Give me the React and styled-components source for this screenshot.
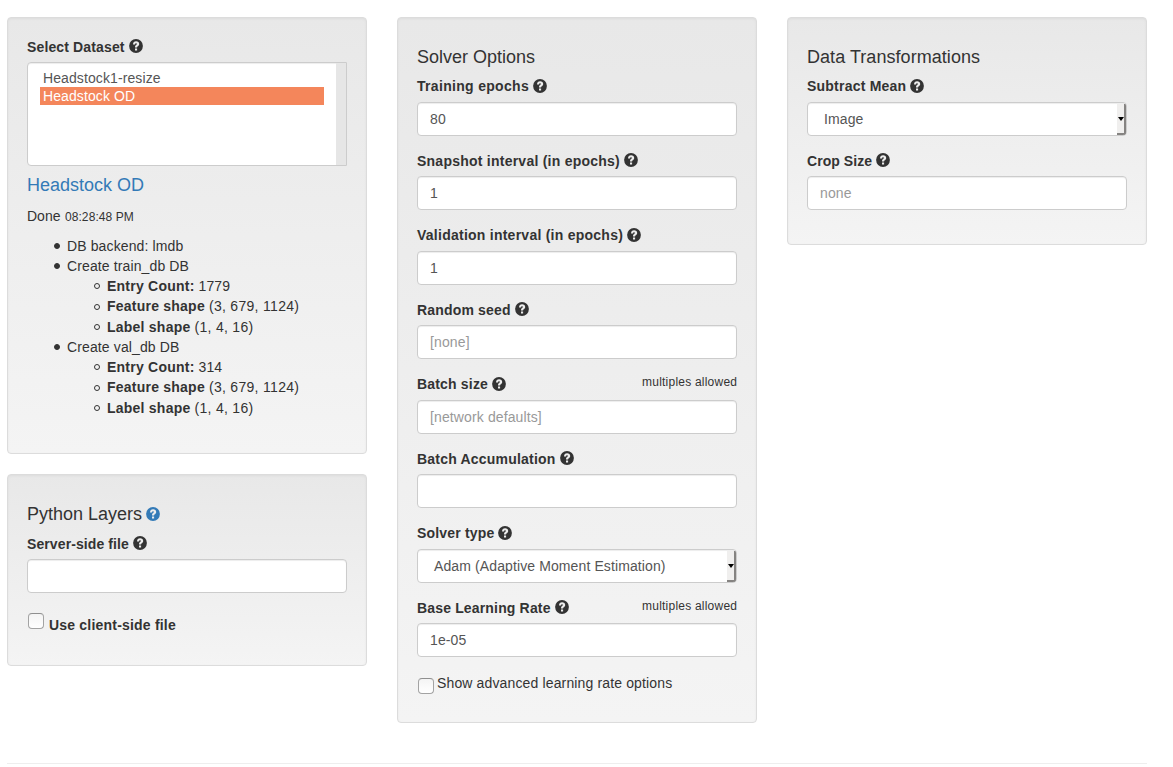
import React from "react";
import styled, { createGlobalStyle } from "styled-components";

const Global = createGlobalStyle`
  *, *::before { box-sizing: border-box; }
  body {
    margin: 0;
    background: #fff;
    color: #333;
    font: 14px/20px "Liberation Sans", Arial, sans-serif;
    overflow: hidden;
  }
`;

const Page = styled.main`
  width: 1140px;
  height: 764px;
  margin-left: 7px;
  padding-top: 17px;
  border-bottom: 1px solid #eee;
`;

const Columns = styled.div`
  display: grid;
  grid-template-columns: repeat(3, 360px);
  gap: 30px;
  align-items: start;
`;

const Column = styled.div`
  display: flex;
  flex-direction: column;
  gap: 20px;
`;

const Well = styled.section`
  height: ${(p) => p.$height}px;
  padding: 19px;
  border: 1px solid #dcdcdc;
  border-radius: 4px;
  background: linear-gradient(#e8e8e8, #f4f4f4);
  box-shadow: inset 0 1px 3px rgba(0, 0, 0, 0.05);
`;

const Heading = styled.h4`
  margin: 10.8px 0 ${(p) => p.$after || 8.8}px;
  font-size: 18px;
  font-weight: 400;
  line-height: 19.8px;
  letter-spacing: ${(p) => p.$spacing || 0}px;
`;

const DatasetHeading = styled(Heading)`
  margin-top: 9.8px;
  margin-bottom: 10.2px;
  color: #337ab7;
`;

const Field = styled.div`
  margin-bottom: 15px;
`;

const LabelRow = styled.div`
  display: flex;
  justify-content: space-between;
  height: ${(p) => p.$height || 20.5}px;
  margin-bottom: 5px;
`;

const Label = styled.label`
  font-weight: 700;
  letter-spacing: ${(p) => p.$spacing || 0}px;
  white-space: nowrap;
`;

const Note = styled.small`
  font-size: 12px;
  line-height: 17px;
  letter-spacing: 0.22px;
  margin-right: -0.2px;
`;

const Small = styled.small`
  margin-left: 0.6px;
  font-size: 12px;
  letter-spacing: 0.08px;
`;

const Input = styled.input`
  display: block;
  width: 100%;
  height: 34px;
  padding: 6px 12px;
  border: 1px solid #ccc;
  border-radius: 4px;
  outline: 0;
  background: #fff;
  color: #555;
  font: inherit;
  letter-spacing: 0.12px;
  box-shadow: inset 0 1px 1px rgba(0, 0, 0, 0.075);
  &::placeholder { color: #999; opacity: 1; }
`;

const SelectBox = styled.div`
  display: flex;
  justify-content: space-between;
  height: 34px;
  padding: 1px 0 0 16px;
  border: 1px solid #ccc;
  border-radius: 4px;
  overflow: hidden;
  background: #fff;
  color: #555;
  line-height: 31px;
  letter-spacing: 0.11px;
  box-shadow: inset 0 1px 1px rgba(0, 0, 0, 0.075);
`;

const SelectArrow = styled.span`
  display: flex;
  align-items: center;
  justify-content: center;
  width: 9px;
  height: 31px;
  padding-top: 1px;
  border-right: 2px solid #858381;
  border-bottom: 2px solid #858381;
  background: #f0efee;
`;

const ListBox = styled.div`
  display: flex;
  height: 104px;
  border: 1px solid #ccc;
  border-radius: 4px 0 0 4px;
  overflow: hidden;
  background: #fff;
  box-shadow: inset 0 1px 1px rgba(0, 0, 0, 0.075);
`;

const Options = styled.div`
  flex: 1;
  padding: 6px 12px;
`;

const Option = styled.div`
  height: 18px;
  padding-left: 3px;
  line-height: 18px;
  letter-spacing: 0.1px;
  color: ${(p) => (p.$selected ? "#fff" : "#555")};
  background: ${(p) => (p.$selected ? "#f4865b" : "transparent")};
`;

const Track = styled.div`
  width: 10px;
  background: #e6e6e6;
`;

const Details = styled.ul`
  margin: 8.35px 0 0;
  padding-left: 40px;
  list-style: none;
  line-height: 20.28px;
  letter-spacing: 0.12px;
`;

const SubList = styled.ul`
  margin: 0;
  padding-left: 40px;
  list-style: none;

  b { letter-spacing: 0.23px; }
`;

const Item = styled.li`
  &::before {
    content: "";
    display: inline-block;
    width: 6px;
    height: 6px;
    margin: 0 7.4px 0 -13.4px;
    border: 1px solid #333;
    border-radius: 50%;
    vertical-align: 1.8px;
    background: ${(p) => (p.$hollow ? "transparent" : "#333")};
  }
`;

const Shape = styled.span`
  letter-spacing: 0.3px;
`;

const CheckRow = styled.label`
  display: flex;
  align-items: flex-start;
  gap: ${(p) => p.$gap}px;
  padding: ${(p) => p.$top}px 0 0 1px;
  font-weight: ${(p) => (p.$bold ? 700 : 400)};
  letter-spacing: ${(p) => (p.$bold ? 0.2 : 0.14)}px;
`;

const Checkbox = styled.input`
  appearance: none;
  width: 16px;
  height: 16px;
  margin: ${(p) => p.$offset}px 0 0;
  border: 1px solid #a3a3a3;
  border-top-color: #8f8f8f;
  border-radius: 4px;
  background: linear-gradient(#f4f4f4, #fff);
`;

const CheckText = styled.span`
  margin-top: ${(p) => p.$offset}px;
`;

const HelpSvg = styled.svg`
  width: 14px;
  height: 14px;
  vertical-align: -1.4px;
  margin-left: ${(p) => (p.$link ? -0.7 : 0)}px;
  color: ${(p) => (p.$link ? "#337ab7" : "#333")};
`;

function Help({ link }) {
  return (
    <HelpSvg $link={link} viewBox="0 0 14 14" aria-hidden="true">
      <circle cx="7" cy="7" r="6.9" fill="currentColor" />
      <path
        d="M4 5.5C4.1 3.5 5.2 2.3 7.1 2.3C8.9 2.3 10.2 3.4 10.2 5C10.2 6.1 9.5 6.8 8.8 7.3C8.3 7.6 8.1 7.8 8.1 8.4H6C6 7.1 6.3 6.6 7 6C7.5 5.6 7.9 5.4 7.9 4.9C7.9 4.5 7.6 4.2 7.1 4.2C6.5 4.2 6.1 4.7 6.1 5.5ZM6 9.4H8.1V11.5H6Z"
        fill="#ededed"
      />
    </HelpSvg>
  );
}

function FieldLabel({ text, note, spacing, height }) {
  return (
    <LabelRow $height={height}>
      <Label $spacing={spacing}>
        {text} <Help />
      </Label>
      {note && <Note>{note}</Note>}
    </LabelRow>
  );
}

function TextField({ label, note, value = "", placeholder, spacing }) {
  return (
    <Field>
      <FieldLabel text={label} note={note} spacing={spacing} />
      <Input defaultValue={value} placeholder={placeholder} />
    </Field>
  );
}

function SelectField({ label, value, spacing }) {
  return (
    <Field>
      <FieldLabel text={label} spacing={spacing} />
      <SelectBox>
        {value}
        <SelectArrow>
          <svg width="6" height="4" viewBox="0 0 6 4">
            <path d="M0 0H6L3 4Z" fill="#000" />
          </svg>
        </SelectArrow>
      </SelectBox>
    </Field>
  );
}

function Database({ name, count }) {
  return (
    <Item>
      Create {name} DB
      <SubList>
        <Item $hollow><b>Entry Count:</b> {count}</Item>
        <Item $hollow><b>Feature shape</b> <Shape>(3, 679, 1124)</Shape></Item>
        <Item $hollow><b>Label shape</b> <Shape>(1, 4, 16)</Shape></Item>
      </SubList>
    </Item>
  );
}

export default function App() {
  return (
    <>
      <Global />
      <Page>
        <Columns>
          <Column>
            <Well $height={437}>
              <FieldLabel text="Select Dataset" spacing={0.14} height={20.4} />
              <ListBox>
                <Options>
                  <Option>Headstock1-resize</Option>
                  <Option $selected>Headstock OD</Option>
                </Options>
                <Track />
              </ListBox>
              <DatasetHeading>Headstock OD</DatasetHeading>
              <div>Done <Small>08:28:48 PM</Small></div>
              <Details>
                <Item>DB backend: lmdb</Item>
                <Database name="train_db" count="1779" />
                <Database name="val_db" count="314" />
              </Details>
            </Well>
            <Well $height={192}>
              <Heading $after={9}>Python Layers <Help link /></Heading>
              <TextField label="Server-side file" spacing={0.1} />
              <CheckRow $bold $gap={5} $top={5}>
                <Checkbox type="checkbox" $offset={0} />
                <CheckText $offset={2}>Use client-side file</CheckText>
              </CheckRow>
            </Well>
          </Column>
          <Well $height={706}>
            <Heading>Solver Options</Heading>
            <TextField label="Training epochs" value="80" spacing={0.31} />
            <TextField label="Snapshot interval (in epochs)" value="1" spacing={0.24} />
            <TextField label="Validation interval (in epochs)" value="1" spacing={0.25} />
            <TextField label="Random seed" placeholder="[none]" spacing={0.17} />
            <TextField label="Batch size" note="multiples allowed" placeholder="[network defaults]" spacing={0.18} />
            <TextField label="Batch Accumulation" spacing={0.21} />
            <SelectField label="Solver type" value="Adam (Adaptive Moment Estimation)" spacing={0.17} />
            <TextField label="Base Learning Rate" note="multiples allowed" value="1e-05" spacing={0.16} />
            <CheckRow $gap={3} $top={1}>
              <Checkbox type="checkbox" $offset={5} />
              <CheckText $offset={0}>Show advanced learning rate options</CheckText>
            </CheckRow>
          </Well>
          <Well $height={228}>
            <Heading $spacing={0.05}>Data Transformations</Heading>
            <SelectField label="Subtract Mean" value="Image" spacing={0.22} />
            <TextField label="Crop Size" placeholder="none" spacing={0.06} />
          </Well>
        </Columns>
      </Page>
    </>
  );
}
